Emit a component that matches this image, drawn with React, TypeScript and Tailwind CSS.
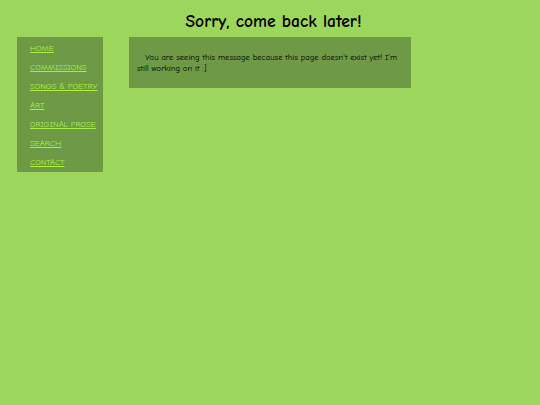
export default function App() {
  const links = ["HOME", "COMMISSIONS", "SONGS & POETRY", "ART", "ORIGINAL PROSE", "SEARCH", "CONTACT"];

  return (
    <div
      className="min-h-[405px] w-[540px] bg-[#9dd65d] text-black"
      style={{ fontFamily: '"Comic Sans MS", "Comic Neue", "DejaVu Sans", sans-serif' }}
    >
      <h1 className="pt-[10px] pl-[7px] text-center text-[17.5px] font-bold leading-[23px]">Sorry, come back later!</h1>
      <div className="mt-[4px] flex items-start gap-[26px] pl-[17px]">
        <nav className="flex w-[86px] flex-col bg-[#6f9a45] pt-[2px] pl-[13px]">
          {links.map((l) => (
            <a key={l} href="#" className="h-[19px] whitespace-nowrap text-[8.5px] leading-[19px] text-[#a2f043] underline">
              {l}
            </a>
          ))}
        </nav>
        <div className="w-[282px] bg-[#6f9a45] px-[8px] pt-[15px] pb-[14px]">
          <p className="indent-[8px] text-[8.6px] leading-[11px]">
            You are seeing this message because this page doesn't exist yet! I'm still working on it :]
          </p>
        </div>
      </div>
    </div>
  );
}
